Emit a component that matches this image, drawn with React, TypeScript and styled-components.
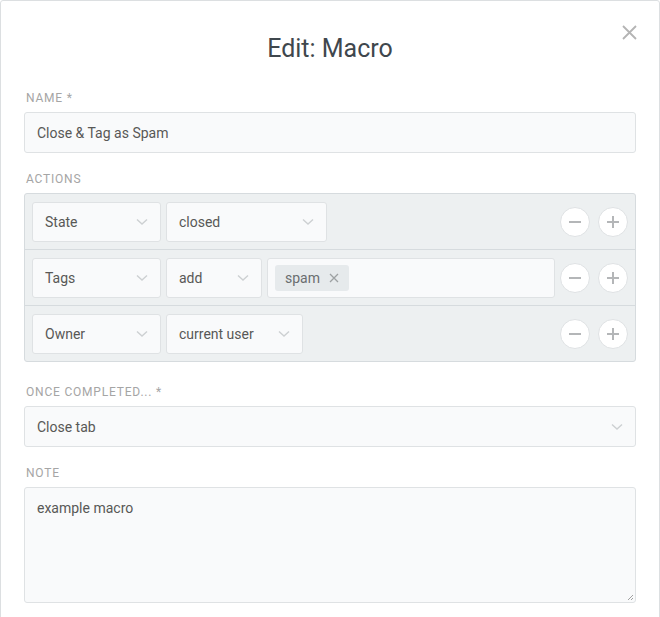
import React from 'react';
import styled, { createGlobalStyle } from 'styled-components';

const GlobalStyle = createGlobalStyle`
  html, body {
    margin: 0;
    padding: 0;
    background: #fff;
  }
  body {
    font-family: Roboto, 'Noto Sans', sans-serif;
    color: #585856;
  }
  * { box-sizing: border-box; }
`;

const Modal = styled.div`
  width: 660px;
  min-height: 640px;
  border: 1px solid #dcdfe1;
  border-radius: 3px;
  background: #fff;
  position: relative;
  padding: 0 23px 20px 23px;
`;

const Header = styled.div`
  height: 91px;
  display: flex;
  align-items: center;
  justify-content: center;
`;

const Title = styled.h1`
  margin: 0;
  font-size: 25px;
  font-weight: 400;
  color: #3f474d;
  padding-top: 3px;
`;

const CloseButton = styled.div`
  position: absolute;
  top: 23px;
  right: 21px;
  width: 17px;
  height: 17px;
`;

const Field = styled.div<{ $gap?: number }>`
  margin-bottom: ${(p) => p.$gap ?? 20}px;
`;

const Label = styled.div`
  font-size: 12px;
  letter-spacing: 0.8px;
  text-transform: uppercase;
  color: #a5a5a5;
  margin: 0 0 8px 2px;
  line-height: 12px;
`;

const Input = styled.div`
  height: 41px;
  background: #f9fafb;
  border: 1px solid #dfe2e4;
  border-radius: 3px;
  display: flex;
  align-items: center;
  padding: 0 12px;
  font-size: 14px;
  color: #585856;
  position: relative;
`;

const TextArea = styled(Input)`
  height: 116px;
  align-items: flex-start;
  padding-top: 12px;
`;

const ResizeHandle = styled.svg`
  position: absolute;
  right: 1px;
  bottom: 1px;
`;

const ActionsBox = styled.div`
  background: #edf0f1;
  border: 1px solid #d6dbde;
  border-radius: 3px;
`;

const ActionRow = styled.div`
  height: 55px;
  display: flex;
  align-items: center;
  gap: 5px;
  padding: 0 7px;
  & + & {
    height: 56px;
    border-top: 1px solid #d6dbde;
  }
`;

const Select = styled.div<{ $w?: number; $grow?: boolean }>`
  height: ${(p) => (p.$grow ? 41 : 40)}px;
  width: ${(p) => (p.$w ? `${p.$w}px` : 'auto')};
  flex: ${(p) => (p.$grow ? '1' : 'none')};
  background: #f9fafb;
  border: 1px solid #dfe2e4;
  border-radius: 3px;
  display: flex;
  align-items: center;
  justify-content: space-between;
  padding: 0 12px;
  font-size: 14px;
  color: #585856;
`;

const Chevron = styled.svg`
  flex: none;
`;

const TagInput = styled.div`
  flex: 1;
  height: 40px;
  background: #f9fafb;
  border: 1px solid #dfe2e4;
  border-radius: 3px;
  display: flex;
  align-items: center;
  padding: 0 7px;
`;

const Tag = styled.div`
  height: 26px;
  background: #e6eaec;
  border-radius: 3px;
  display: flex;
  align-items: center;
  gap: 9px;
  padding: 0 10px;
  font-size: 14px;
  color: #6a6e70;
`;

const Spacer = styled.div`
  flex: 1;
`;

const RoundButtons = styled.div`
  display: flex;
  gap: 8px;
`;

const RoundButton = styled.div`
  width: 30px;
  height: 30px;
  border-radius: 50%;
  background: #fff;
  border: 1px solid #dfe2e4;
  display: flex;
  align-items: center;
  justify-content: center;
`;

const ChevronIcon = () => (
  <Chevron width="12" height="8" viewBox="0 0 12 8">
    <path d="M1 1.5 L6 6 L11 1.5" fill="none" stroke="#cdd0d2" strokeWidth="1.4" />
  </Chevron>
);

const Minus = () => (
  <svg width="12" height="12" viewBox="0 0 12 12">
    <path d="M0 6 H12" stroke="#b4b6b8" strokeWidth="2" />
  </svg>
);

const Plus = () => (
  <svg width="12" height="12" viewBox="0 0 12 12">
    <path d="M0 6 H12 M6 0 V12" stroke="#b4b6b8" strokeWidth="2" />
  </svg>
);

const SelectBox = ({ label, w, grow }: { label: string; w?: number; grow?: boolean }) => (
  <Select $w={w} $grow={grow}>
    <span>{label}</span>
    <ChevronIcon />
  </Select>
);

const Controls = () => (
  <RoundButtons>
    <RoundButton>
      <Minus />
    </RoundButton>
    <RoundButton>
      <Plus />
    </RoundButton>
  </RoundButtons>
);

export default function App() {
  return (
    <>
      <GlobalStyle />
      <Modal>
        <Header>
          <Title>Edit: Macro</Title>
        </Header>
        <CloseButton>
          <svg width="17" height="17" viewBox="0 0 17 17">
            <path d="M2 2 L15 15 M15 2 L2 15" stroke="#b4b4b4" strokeWidth="1.8" />
          </svg>
        </CloseButton>

        <Field>
          <Label>Name *</Label>
          <Input>Close &amp; Tag as Spam</Input>
        </Field>

        <Field $gap={24}>
          <Label>Actions</Label>
          <ActionsBox>
            <ActionRow>
              <SelectBox label="State" w={129} />
              <SelectBox label="closed" w={161} />
              <Spacer />
              <Controls />
            </ActionRow>
            <ActionRow>
              <SelectBox label="Tags" w={129} />
              <SelectBox label="add" w={96} />
              <TagInput>
                <Tag>
                  spam
                  <svg width="10" height="10" viewBox="0 0 10 10">
                    <path d="M1 1 L9 9 M9 1 L1 9" stroke="#9da1a3" strokeWidth="1.3" />
                  </svg>
                </Tag>
              </TagInput>
              <Controls />
            </ActionRow>
            <ActionRow>
              <SelectBox label="Owner" w={129} />
              <SelectBox label="current user" w={137} />
              <Spacer />
              <Controls />
            </ActionRow>
          </ActionsBox>
        </Field>

        <Field>
          <Label>Once completed... *</Label>
          <SelectBox label="Close tab" grow />
        </Field>

        <Field>
          <Label>Note</Label>
          <TextArea>
            example macro
            <ResizeHandle width="7" height="7" viewBox="0 0 7 7">
              <path d="M6 1 L1 6 M6 4 L4 6" stroke="#a0a0a0" strokeWidth="1" />
            </ResizeHandle>
          </TextArea>
        </Field>
      </Modal>
    </>
  );
}
